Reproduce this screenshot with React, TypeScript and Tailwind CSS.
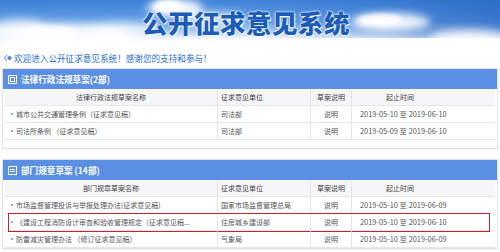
import React from "react";

type Row = { name: string; unit: string; time: string; mark?: boolean };

const lawRows: Row[] = [
  { name: "城市公共交通管理条例（征求意见稿）", unit: "司法部", time: "2019-05-10 至 2019-06-10" },
  { name: "司法所条例 （征求意见稿）", unit: "司法部", time: "2019-05-09 至 2019-06-10" },
];

const deptRows: Row[] = [
  { name: "市场监督管理投诉与举报处理办法(征求意见稿)", unit: "国家市场监督管理总局", time: "2019-05-10 至 2019-06-09" },
  { name: "《建设工程消防设计审查和验收管理规定（征求意见稿...", unit: "住房城乡建设部", time: "2019-05-10 至 2019-06-10", mark: true },
  { name: "防雷减灾管理办法 （修订征求意见稿）", unit: "气象局", time: "2019-05-10 至 2019-06-09" },
];

function Sky() {
  return (
    <svg className="absolute inset-0" width="500" height="50" viewBox="0 0 500 50">
      <defs>
        <linearGradient id="sky" x1="0" y1="0" x2="0.1" y2="1">
          <stop offset="0" stopColor="#3a7fd8" />
          <stop offset="0.5" stopColor="#6aa3e6" />
          <stop offset="0.88" stopColor="#ffffff" />
        </linearGradient>
        <linearGradient id="skyR" x1="0" y1="0" x2="1" y2="0">
          <stop offset="0" stopColor="#2a6cc9" stopOpacity="0" />
          <stop offset="1" stopColor="#2462c0" stopOpacity="0.7" />
        </linearGradient>
        <filter id="blur" x="-50%" y="-50%" width="200%" height="200%">
          <feGaussianBlur stdDeviation="4" />
        </filter>
        <filter id="blur2" x="-50%" y="-50%" width="200%" height="200%">
          <feGaussianBlur stdDeviation="2" />
        </filter>
      </defs>
      <rect width="500" height="50" fill="url(#sky)" />
      <rect x="250" width="250" height="38" fill="url(#skyR)" />
      <g fill="#ffffff" filter="url(#blur)">
        <ellipse cx="60" cy="34" rx="70" ry="11" opacity="0.85" />
        <ellipse cx="20" cy="28" rx="30" ry="9" opacity="0.75" />
        <ellipse cx="120" cy="30" rx="40" ry="8" opacity="0.75" />
        <ellipse cx="175" cy="8" rx="28" ry="9" opacity="0.95" />
        <ellipse cx="215" cy="20" rx="30" ry="8" opacity="0.7" />
        <ellipse cx="390" cy="22" rx="40" ry="9" opacity="0.9" />
        <ellipse cx="470" cy="38" rx="40" ry="8" opacity="0.9" />
        <ellipse cx="250" cy="45" rx="260" ry="7" opacity="1" />
      </g>
      <g fill="#ffffff" filter="url(#blur2)">
        <ellipse cx="168" cy="6" rx="14" ry="6" />
        <ellipse cx="380" cy="20" rx="22" ry="6" opacity="0.9" />
        <ellipse cx="50" cy="32" rx="30" ry="6" opacity="0.75" />
      </g>
    </svg>
  );
}

function LawIcon() {
  return (
    <svg width="9" height="9" viewBox="0 0 9 9" fill="none" stroke="#fff" strokeWidth="1">
      <rect x="0.5" y="0.5" width="8" height="8" />
      <rect x="2.5" y="2.5" width="4" height="4" />
    </svg>
  );
}

function DeptIcon() {
  return (
    <svg width="9" height="9" viewBox="0 0 9 9" fill="none" stroke="#fff" strokeWidth="1">
      <rect x="0.5" y="0.5" width="8" height="8" />
      <path d="M2 3.5h5M2 5.5h5" />
    </svg>
  );
}

function Section({ title, icon, head, rows, bottomPad }: { title: string; icon: React.ReactNode; head: string; rows: Row[]; bottomPad: boolean }) {
  return (
    <div className={`mx-[2px] border border-[#e3e3e3] ${bottomPad ? "pb-[8px]" : ""} shadow-[0_1px_2px_rgba(0,0,0,0.06)]`}>
      <div className="h-[20px] bg-[#5b8fe3] flex items-center pl-[5px] gap-[4px] text-white font-bold text-[8.6px]">
        {icon}
        <span>{title}</span>
      </div>
      <div className="px-[2px] pt-[1px]">
        <div className="h-[16px] flex items-center bg-[#f5f6f8] text-[#444] text-[7px] border-b border-[#e6e6e6]">
          <div className="w-[212px] text-center">{head}</div>
          <div className="w-[93px] h-full flex items-center pl-[3px] border-l border-[#e3e3e3]">征求意见单位</div>
          <div className="w-[41px] h-full flex items-center justify-center border-l border-[#e3e3e3]">草案说明</div>
          <div className="flex-1 h-full flex items-center pl-[34px] border-l border-[#e3e3e3]">起止时间</div>
        </div>
        {rows.map((r) => (
          <div key={r.name} className="relative h-[17px] flex items-center text-[#555] text-[7px] border-b border-[#e6e6e6]">
            <div className="w-[212px] flex items-center pl-[6px] gap-[3px] whitespace-nowrap overflow-hidden">
              <span className="w-[2px] h-[2px] rounded-full bg-[#5b8fe3] shrink-0" />
              <span>{r.name}</span>
            </div>
            <div className="w-[93px] h-full flex items-center pl-[3px] border-l border-[#e3e3e3] whitespace-nowrap">{r.unit}</div>
            <div className="w-[41px] h-full flex items-center justify-center border-l border-[#e3e3e3]">说明</div>
            <div className="flex-1 h-full flex items-center pl-[8px] border-l border-[#e3e3e3] text-[7.4px] whitespace-nowrap">{r.time}</div>
            {r.mark && <div className="absolute left-[3px] right-[5px] top-[-1px] bottom-[-2px] border-[1.5px] border-[#c8232c]" />}
          </div>
        ))}
      </div>
    </div>
  );
}

export default function App() {
  return (
    <div className="w-[500px] h-[252px] overflow-hidden bg-white" style={{ fontFamily: '"Noto Sans CJK SC", "Noto Sans", sans-serif' }}>
      <div className="relative h-[48px]">
        <Sky />
        <div className="relative flex justify-center pt-[3px] pr-[8px]">
          <h1 className="text-[25.5px] font-black tracking-[0.5px] text-[#1b5cb8] [text-shadow:0_0_2px_#fff,0_0_2px_#fff,1px_1px_1px_#fff]">
            公开征求意见系统
          </h1>
        </div>
      </div>
      <div className="h-[20px] flex items-center pl-[4px] gap-[2px] text-[8.6px] text-[#2d6fcc]">
        <svg width="8" height="8" viewBox="0 0 8 8">
          <path d="M3 1L0.5 4L3 7" fill="none" stroke="#4a86d8" strokeWidth="1" />
          <path d="M5.5 1.5L8 4L5.5 6.5L3 4Z" fill="#4a86d8" />
        </svg>
        <span>欢迎进入公开征求意见系统！感谢您的支持和参与！</span>
      </div>
      <Section title="法律行政法规草案(2部)" icon={<LawIcon />} head="法律行政法规草案名称" rows={lawRows} bottomPad />
      <div className="h-[10px]" />
      <Section title="部门规章草案 (14部)" icon={<DeptIcon />} head="部门规章草案名称" rows={deptRows} bottomPad={false} />
    </div>
  );
}
